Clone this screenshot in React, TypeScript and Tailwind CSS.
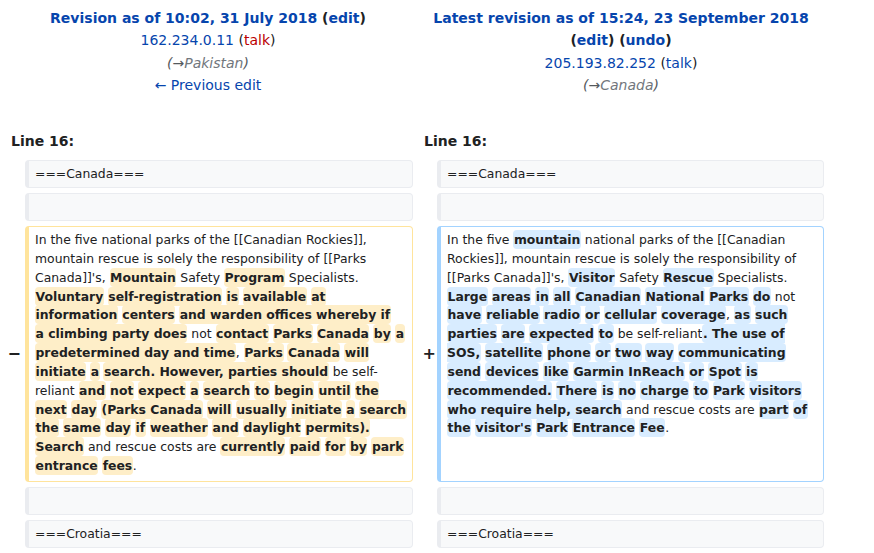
const LEFT_LINES = [
  "In the five national parks of the [[Canadian Rockies]],",
  "mountain rescue is solely the responsibility of [[Parks",
  "Canada]]'s, {Mountain} Safety {Program} Specialists.",
  "{Voluntary} {self-registration} {is} {available} {at}",
  "{information} {centers} {and warden offices whereby if}",
  "{a climbing party does} not {contact} {Parks} {Canada} {by} {a}",
  "{predetermined day and time}, {Parks} {Canada} {will}",
  "{initiate} {a} {search. However, parties should} be self-",
  "reliant {and} {not} {expect} {a} {search} {to} {begin} {until} {the}",
  "{next} {day} {(Parks Canada} {will} {usually} {initiate} {a} {search}",
  "{the} {same} {day} {if} {weather} {and} {daylight} {permits).}",
  "{Search} and rescue costs are {currently} {paid} {for} {by} {park}",
  "{entrance} {fees}.",
];

const RIGHT_TEXT =
  "In the five {mountain} national parks of the [[Canadian Rockies]], mountain rescue is solely the responsibility of [[Parks Canada]]'s, {Visitor} Safety {Rescue} Specialists. {Large} {areas} {in} {all} {Canadian} {National} {Parks} {do} not {have} {reliable} {radio} {or} {cellular} {coverage}, {as} {such} {parties} {are} {expected} {to} be self-reliant{. The use of SOS,} {satellite} {phone} {or} {two} {way} {communicating} {send} {devices} {like} {Garmin InReach} {or} {Spot} {is} {recommended.} {There} {is} {no} {charge} {to} {Park} {visitors} {who require help, search} and rescue costs are {part} {of} {the} {visitor's} {Park} {Entrance} {Fee}.";

function Marked({ text, hl }: { text: string; hl: string }) {
  const parts = text.split(/(\{[^}]*\})/);
  return (
    <>
      {parts.map((p, i) =>
        p.startsWith("{") ? (
          <span key={i} className={`${hl} rounded-[4px] px-[0.5px] py-[2px] font-bold`}>
            {p.slice(1, -1)}
          </span>
        ) : (
          <span key={i}>{p}</span>
        )
      )}
    </>
  );
}

function Context({ text }: { text?: string }) {
  return (
    <div className="flex h-[28px] items-center rounded-[4px] border border-l-4 border-[#eaecf0] bg-[#f8f9fa] px-[6px]">
      {text}
    </div>
  );
}

function Marker({ sign, pad }: { sign: string; pad: string }) {
  return (
    <div className={`flex items-center justify-end ${pad} text-[16px] font-bold text-[#202122]`}>
      {sign}
    </div>
  );
}

export default function App() {
  const link = "text-[#0645ad]";
  return (
    <div className="min-h-screen bg-white font-['DejaVu_Sans',sans-serif] text-[#202122]">
      <div className="grid grid-cols-[25px_388px_24px_387px_5px] pt-[7px] text-center text-[14px] leading-[22.4px]">
        <div className="col-span-2 pl-[3px]">
          <div className="font-bold">
            <span className={link}>Revision as of 10:02, 31 July 2018</span> (
            <span className={link}>edit</span>)
          </div>
          <div>
            <span className={link}>162.234.0.11</span> (<span className="text-[#ba0000]">talk</span>)
          </div>
          <div className="italic text-[#54595d]">
            (→<span className="text-[#72777d]">Pakistan</span>)
          </div>
          <div className={link}>← Previous edit</div>
        </div>
        <div className="col-span-3">
          <div className="font-bold">
            <span className={link}>Latest revision as of 15:24, 23 September 2018</span>
          </div>
          <div className="font-bold">
            (<span className={link}>edit</span>) (<span className={link}>undo</span>)
          </div>
          <div>
            <span className={link}>205.193.82.252</span> (<span className={link}>talk</span>)
          </div>
          <div className="italic text-[#54595d]">
            (→<span className="text-[#72777d]">Canada</span>)
          </div>
        </div>
      </div>

      <div className="mt-[33px] grid grid-cols-[25px_388px_24px_387px_5px] text-[14px] font-bold leading-[22.4px]">
        <div className="col-span-2 pl-[11px]">Line 16:</div>
        <div className="col-span-3 pl-[11px]">Line 16:</div>
      </div>

      <div className="mt-[8px] grid grid-cols-[25px_388px_24px_387px_5px] gap-y-[5px] text-[12.4px] leading-[18.85px]">
        <div />
        <Context text="===Canada===" />
        <div />
        <Context text="===Canada===" />
        <div />

        <div />
        <Context />
        <div />
        <Context />
        <div />

        <Marker sign="−" pad="pr-[4px]" />
        <div className="whitespace-nowrap rounded-[4px] border border-l-4 border-[#ffe49c] bg-white pb-[5px] pl-[6px] pr-[6px] pt-[4px]">
          {LEFT_LINES.map((line, i) => (
            <div key={i}>
              <Marked text={line} hl="bg-[#feeec8]" />
            </div>
          ))}
        </div>
        <Marker sign="+" pad="pr-[1px]" />
        <div className="rounded-[4px] border border-l-4 border-[#a3d3ff] bg-white pb-[5px] pl-[6px] pr-[6px] pt-[4px]">
          <Marked text={RIGHT_TEXT} hl="bg-[#d8ecff]" />
        </div>
        <div />

        <div />
        <Context />
        <div />
        <Context />
        <div />

        <div />
        <Context text="===Croatia===" />
        <div />
        <Context text="===Croatia===" />
        <div />
      </div>
    </div>
  );
}
